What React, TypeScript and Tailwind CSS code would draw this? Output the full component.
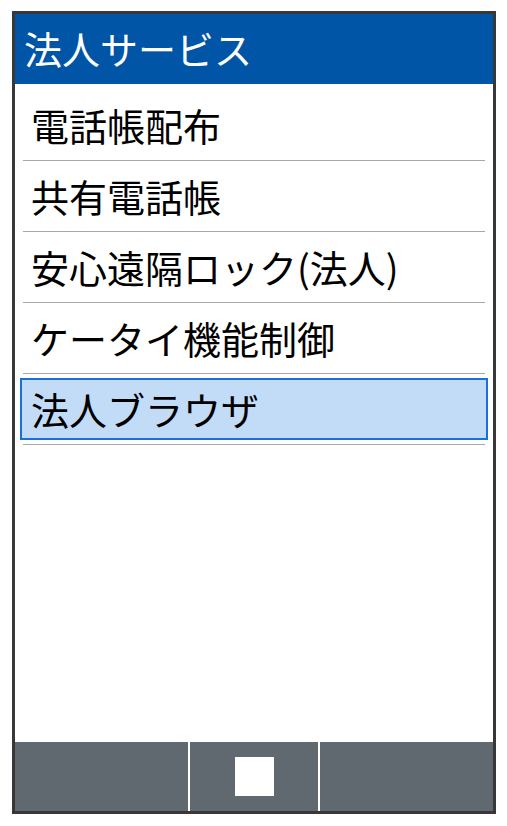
const items = ['電話帳配布', '共有電話帳', '安心遠隔ロック(法人)', 'ケータイ機能制御', '法人ブラウザ'];

export default function App() {
  const selected = 4;
  return (
    <div className="w-[507px] h-[826px] bg-white pt-[11px] pl-[12px]" style={{ fontFamily: '"Noto Sans CJK JP", "Noto Sans", sans-serif' }}>
      <div className="w-[484px] h-[803px] border-[3px] border-[#383838] flex flex-col bg-white">
        <div className="h-[70px] bg-[#0055a6] flex items-center pl-[9px] pb-[2px] text-white text-[38px] leading-none">
          法人サービス
        </div>
        <div className="flex-1 pt-[6px]">
          {items.map((label, i) => (
            <div key={label}>
              <div className="h-[70px] flex items-center">
                {i === selected ? (
                  <div className="mx-[5px] h-[62px] w-full border-2 border-[#1c6fd8] bg-[#c2dcf8] flex items-center pl-[9px] text-black text-[38px] leading-none">
                    {label}
                  </div>
                ) : (
                  <div className="pl-[16px] text-black text-[38px] leading-none">{label}</div>
                )}
              </div>
              <div className="mx-[8px] h-px bg-[#a8a8a8]" />
            </div>
          ))}
        </div>
        <div className="h-[69px] bg-[#606870] flex">
          <div className="w-[173px]" />
          <div className="w-[2px] bg-white" />
          <div className="w-[128px] flex items-center justify-center">
            <div className="w-[39px] h-[39px] bg-white" />
          </div>
          <div className="w-[2px] bg-white" />
          <div className="flex-1" />
        </div>
      </div>
    </div>
  );
}
